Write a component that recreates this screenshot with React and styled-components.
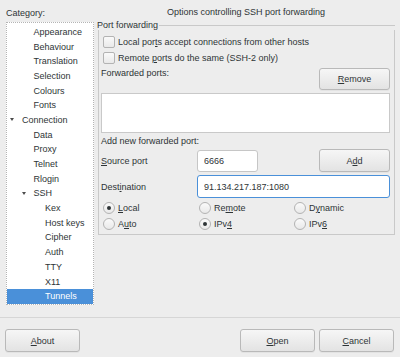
import React from 'react'
import styled, { createGlobalStyle } from 'styled-components'

const GlobalStyle = createGlobalStyle`
  html, body {
    margin: 0;
    padding: 0;
    background: #ededed;
  }
  body {
    font-family: 'Liberation Sans', Arial, sans-serif;
    font-size: 9px;
    color: #2e3436;
  }
  * {
    box-sizing: border-box;
  }
`

const tree = [
  { label: 'Appearance', level: 1 },
  { label: 'Behaviour', level: 1 },
  { label: 'Translation', level: 1 },
  { label: 'Selection', level: 1 },
  { label: 'Colours', level: 1 },
  { label: 'Fonts', level: 1 },
  { label: 'Connection', level: 0, open: true },
  { label: 'Data', level: 1 },
  { label: 'Proxy', level: 1 },
  { label: 'Telnet', level: 1 },
  { label: 'Rlogin', level: 1 },
  { label: 'SSH', level: 1, open: true },
  { label: 'Kex', level: 2 },
  { label: 'Host keys', level: 2 },
  { label: 'Cipher', level: 2 },
  { label: 'Auth', level: 2 },
  { label: 'TTY', level: 2 },
  { label: 'X11', level: 2 },
  { label: 'Tunnels', level: 2, selected: true },
]

// label with one underlined mnemonic letter
const Mn = ({ text, at }) => (
  <span>
    {text.slice(0, at)}
    <U>{text[at]}</U>
    {text.slice(at + 1)}
  </span>
)

export default function App() {
  return (
    <>
      <GlobalStyle />
      <Window>
        <Main>
          <Sidebar>
            <Caption>Category:</Caption>
            <Tree>
              {tree.map((item) => (
                <Row key={item.label} $level={item.level} $selected={item.selected}>
                  <Expander>{item.open && <Arrow />}</Expander>
                  <span>{item.label}</span>
                </Row>
              ))}
            </Tree>
          </Sidebar>

          <Content>
            <Title>Options controlling SSH port forwarding</Title>
            <GroupHead>
              <Legend>Port forwarding</Legend>
            </GroupHead>
            <GroupBody>
              <CheckRow>
                <CheckBox />
                <Mn text="Local ports accept connections from other hosts" at={9} />
              </CheckRow>
              <CheckRow>
                <CheckBox />
                <Mn text="Remote ports do the same (SSH-2 only)" at={7} />
              </CheckRow>

              <ListHead>
                <span>Forwarded ports:</span>
                <Button $w={71} $h={22}>
                  <Mn text="Remove" at={0} />
                </Button>
              </ListHead>
              <ListBox />

              <SubLabel>Add new forwarded port:</SubLabel>
              <FormRow>
                <Mn text="Source port" at={0} />
                <Input value="6666" readOnly $w={61} />
                <span />
                <Button $w={71} $h={23}>
                  <Mn text="Add" at={1} />
                </Button>
              </FormRow>
              <DestRow>
                <Mn text="Destination" at={4} />
                <Input value="91.134.217.187:1080" readOnly $focused />
              </DestRow>

              <RadioGrid>
                <RadioItem>
                  <Radio $checked />
                  <Mn text="Local" at={0} />
                </RadioItem>
                <RadioItem>
                  <Radio />
                  <Mn text="Remote" at={2} />
                </RadioItem>
                <RadioItem>
                  <Radio />
                  <Mn text="Dynamic" at={1} />
                </RadioItem>
                <RadioItem>
                  <Radio />
                  <Mn text="Auto" at={1} />
                </RadioItem>
                <RadioItem>
                  <Radio $checked />
                  <Mn text="IPv4" at={3} />
                </RadioItem>
                <RadioItem>
                  <Radio />
                  <Mn text="IPv6" at={3} />
                </RadioItem>
              </RadioGrid>
            </GroupBody>
          </Content>
        </Main>

        <Separator />

        <Footer>
          <Button $w={75} $h={23}>
            <Mn text="About" at={0} />
          </Button>
          <FooterRight>
            <Button $w={75} $h={23}>
              <Mn text="Open" at={0} />
            </Button>
            <Button $w={75} $h={23}>
              <Mn text="Cancel" at={0} />
            </Button>
          </FooterRight>
        </Footer>
      </Window>
    </>
  )
}

const Window = styled.div`
  width: 400px;
  height: 357px;
  display: flex;
  flex-direction: column;
  overflow: hidden;
`

const Main = styled.div`
  height: 317px;
  display: flex;
`

const Sidebar = styled.div`
  width: 97px;
  padding: 0 3px 0 6px;
  display: flex;
  flex-direction: column;
`

const Caption = styled.div`
  height: 22px;
  padding-top: 4px;
  display: flex;
  align-items: center;
`

const Tree = styled.div`
  height: 283px;
  padding-top: 1.5px;
  background: #ffffff;
  border: 1px dotted #b4b4b4;
`

const Row = styled.div`
  height: 14.7px;
  display: flex;
  align-items: center;
  padding-left: ${(p) => 3 + p.$level * 11.5}px;
  background: ${(p) => (p.$selected ? '#4a90d9' : 'transparent')};
  color: ${(p) => (p.$selected ? '#ffffff' : '#2e3436')};
`

const Expander = styled.span`
  width: 12px;
  flex: none;
  display: flex;
  align-items: center;
`

const Arrow = styled.span`
  width: 0;
  height: 0;
  border-left: 2.5px solid transparent;
  border-right: 2.5px solid transparent;
  border-top: 3.5px solid #4c4c4c;
`

const Content = styled.div`
  flex: 1;
  padding: 0 5px 0 0;
  display: flex;
  flex-direction: column;
`

const Title = styled.div`
  height: 20px;
  padding-top: 4px;
  display: flex;
  align-items: center;
  justify-content: center;
`

const GroupHead = styled.div`
  height: 10px;
  display: flex;
  align-items: center;

  &::after {
    content: '';
    flex: 1;
    height: 1px;
    margin-left: 1px;
    background: #c9c9c9;
  }
`

const Legend = styled.span`
  line-height: 10px;
`

const GroupBody = styled.div`
  margin-left: 1px;
  padding: 4px 4px 2px 2px;
  border: 1px solid #c9c9c9;
  border-top: none;
  display: flex;
  flex-direction: column;
`

const CheckRow = styled.div`
  height: 16px;
  display: flex;
  align-items: center;
  gap: 3px;
  padding-left: 2px;
`

const CheckBox = styled.span`
  width: 12px;
  height: 12px;
  border: 1px solid #b3b3b3;
  border-radius: 2px;
  background: linear-gradient(#fafafa, #e9e9e9);
`

const ListHead = styled.div`
  margin-top: 2px;
  display: flex;
  justify-content: space-between;
  align-items: flex-start;
  line-height: 11px;
`

const Button = styled.div`
  width: ${(p) => p.$w}px;
  height: ${(p) => p.$h}px;
  display: flex;
  align-items: center;
  justify-content: center;
  border: 1px solid #b9b9b9;
  border-radius: 3px;
  background: linear-gradient(#f6f6f6, #e3e3e3);
  box-shadow: 0 1px 0 rgba(0, 0, 0, 0.04);
  color: #2e3436;
`

const U = styled.span`
  text-decoration: underline;
  text-underline-offset: 1px;
`

const ListBox = styled.div`
  height: 40px;
  margin-top: 3px;
  background: #ffffff;
  border: 1px solid #c9c9c9;
`

const SubLabel = styled.div`
  margin-top: 3px;
  line-height: 11px;
`

const FormRow = styled.div`
  margin-top: 2px;
  height: 23px;
  display: grid;
  grid-template-columns: 96px auto 1fr auto;
  align-items: center;
`

const DestRow = styled.div`
  margin-top: 3px;
  height: 23px;
  display: grid;
  grid-template-columns: 96px 1fr;
  align-items: center;
`

const Input = styled.input`
  width: ${(p) => (p.$w ? `${p.$w}px` : '100%')};
  height: ${(p) => (p.$w ? 22 : 23)}px;
  padding: 0 0 0 6px;
  font: inherit;
  color: #2e3436;
  background: #ffffff;
  border: 1px solid ${(p) => (p.$focused ? '#4a90d9' : '#c6c6c6')};
  border-radius: 3px;
  outline: none;
`

const RadioGrid = styled.div`
  margin-top: 2px;
  display: grid;
  grid-template-columns: 96px 95px 1fr;
  grid-auto-rows: 16px;
`

const RadioItem = styled.div`
  display: flex;
  align-items: center;
  gap: 3px;
  padding-left: 2px;
`

const Radio = styled.span`
  width: 12px;
  height: 12px;
  border-radius: 50%;
  border: 1px solid #b3b3b3;
  background: linear-gradient(#fafafa, #e9e9e9);
  display: flex;
  align-items: center;
  justify-content: center;

  &::after {
    content: '';
    width: 4px;
    height: 4px;
    border-radius: 50%;
    background: ${(p) => (p.$checked ? '#2e3436' : 'transparent')};
  }
`

const Separator = styled.div`
  height: 1px;
  background: #d6d6d6;
`

const Footer = styled.div`
  padding: 11px 6px 0 5px;
  display: flex;
  justify-content: space-between;
`

const FooterRight = styled.div`
  display: flex;
  gap: 4px;
`
